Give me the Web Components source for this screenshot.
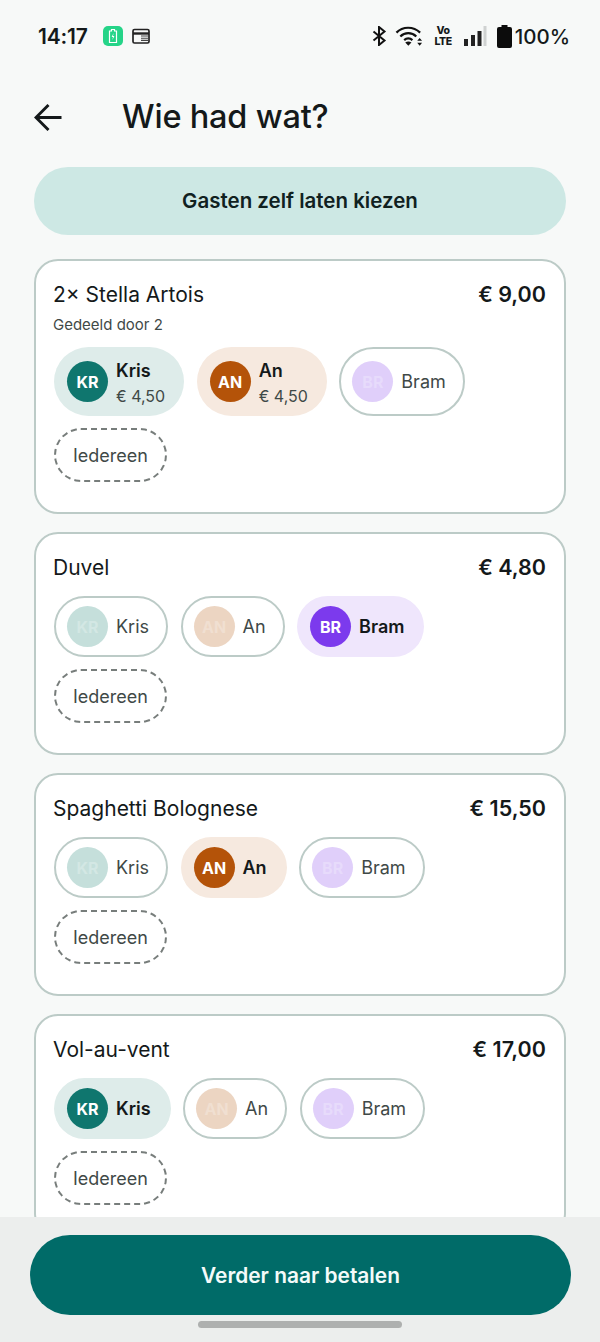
<!DOCTYPE html>
<html lang="nl"><head><meta charset="utf-8"><title>Wie had wat?</title>
<style>
html,body{margin:0;padding:0;height:1342px;overflow:hidden}
body{font-family:Inter,"Noto Sans",sans-serif;background:#f7f9f8;color:#14191a}
#app{height:1342px;display:flex;flex-direction:column}
#list{flex:1;min-height:0;overflow:hidden;display:flex;flex-direction:column;gap:18px;padding:0 34px}
</style></head><body>
<div id="app">
<status-bar></status-bar>
<page-header>Wie had wat?</page-header>
<pill-button>Gasten zelf laten kiezen</pill-button>
<div id="list">
<item-card name="2× Stella Artois" price="€ 9,00" note="Gedeeld door 2">
<person-chip code="KR" name="Kris" color="kr" selected amount="€ 4,50"></person-chip>
<person-chip code="AN" name="An" color="an" selected amount="€ 4,50"></person-chip>
<person-chip code="BR" name="Bram" color="br"></person-chip>
<all-chip>Iedereen</all-chip>
</item-card>
<item-card name="Duvel" price="€ 4,80">
<person-chip code="KR" name="Kris" color="kr"></person-chip>
<person-chip code="AN" name="An" color="an"></person-chip>
<person-chip code="BR" name="Bram" color="br" selected></person-chip>
<all-chip>Iedereen</all-chip>
</item-card>
<item-card name="Spaghetti Bolognese" price="€ 15,50">
<person-chip code="KR" name="Kris" color="kr"></person-chip>
<person-chip code="AN" name="An" color="an" selected></person-chip>
<person-chip code="BR" name="Bram" color="br"></person-chip>
<all-chip>Iedereen</all-chip>
</item-card>
<item-card name="Vol-au-vent" price="€ 17,00">
<person-chip code="KR" name="Kris" color="kr" selected></person-chip>
<person-chip code="AN" name="An" color="an"></person-chip>
<person-chip code="BR" name="Bram" color="br"></person-chip>
<all-chip>Iedereen</all-chip>
</item-card>
</div>
<bottom-bar>Verder naar betalen</bottom-bar>
</div>
<script>
function def(tag, html, init){
  customElements.define(tag, class extends HTMLElement{
    constructor(){super();this.attachShadow({mode:'open'}).innerHTML=html;}
    connectedCallback(){ if(init) init(this, this.shadowRoot); }
  });
}
def('status-bar',`<style>
:host{display:flex;align-items:center;height:72px;padding:0 30px 0 38px;box-sizing:border-box;font-family:Inter,sans-serif;color:#14191a}
.t{font-size:21px;font-weight:600;letter-spacing:-.2px;width:51px;white-space:nowrap}
.app{width:20px;height:20px;border-radius:5px;background:#25d488;margin-left:14px;display:flex;align-items:center;justify-content:center}
.cal{margin-left:9px;display:block}
.sp{flex:1}
.r{display:flex;align-items:center}
.vo{font-size:10.500px;font-weight:800;line-height:11px;text-align:center;margin:0 11px 0 10px;letter-spacing:-.4px;width:19px}
.pc{font-size:20.500px;font-weight:500;margin-left:3px;white-space:nowrap}
svg{display:block}
</style>
<span class="t">14:17</span>
<span class="app"><svg width="10" height="14" viewBox="0 0 10 14"><path d="M3.500 .5h3v1.500h2v11.500h-7V2h2z" fill="none" stroke="#fff" stroke-width="1.200"/><path d="M5.600 4L3.600 8h1.400l-.6 3 2-4H5z" fill="#fff"/></svg></span>
<svg class="cal" width="18" height="16" viewBox="0 0 18 16"><rect x="1" y="1.500" width="16" height="13.500" rx="1.500" fill="none" stroke="#222" stroke-width="1.700"/><path d="M1 5.500h16" stroke="#222" stroke-width="2.400"/><path d="M9 8h7M9 10.200h7M9 12.400h7" stroke="#444" stroke-width="1.100"/></svg>
<span class="sp"></span>
<span class="r">
<svg width="15" height="20" viewBox="0 0 15 20"><path d="M1.500 5.500l11 9L7 19V1l5.500 4.500-11 9" fill="none" stroke="#111" stroke-width="2"/></svg>
<svg style="margin-left:8px" width="29" height="22" viewBox="0 0 30 22"><path d="M1.500 7.500C8 .8 19 .8 26 7.500M5.500 11.500C10 7 17.500 7 22 11.500M9.500 15.200C12 13 15.500 13 18 15.200" fill="none" stroke="#111" stroke-width="2.300"/><path d="M13.800 21l-3.200-3.300c2-1.500 4.300-1.500 6.400 0z" fill="#111"/><path d="M25.500 13l-2.500 3h5zM25.500 21l-2.500-3h5z" fill="#111"/></svg>
<span class="vo">Vo<br>LTE</span>
<svg width="23" height="22" viewBox="0 0 23 22"><rect x="0" y="14" width="4" height="7" fill="#222"/><rect x="7" y="10" width="4" height="11" fill="#222"/><rect x="13.500" y="6" width="4" height="15" fill="#222"/><rect x="19.500" y="1" width="3" height="20" fill="#cfd2d1"/></svg>
<svg style="margin-left:10px" width="15" height="23" viewBox="0 0 15 23"><path d="M4.500 0h6v2H13a2 2 0 0 1 2 2v17a2 2 0 0 1-2 2H2a2 2 0 0 1-2-2V4a2 2 0 0 1 2-2h2.500z" fill="#0c0c0c"/></svg>
<span class="pc">100%</span>
</span>`);
def('page-header',`<style>
:host{display:flex;align-items:center;height:95px;padding:0 0 0 34px;box-sizing:border-box}
svg{display:block;flex:none;margin-top:-5px}
h1{margin:-6px 0 0 60px;font:500 32.500px/40px Inter,sans-serif;color:#14191a;letter-spacing:-.2px}
</style>
<svg width="28" height="27" viewBox="0 0 28 27"><path d="M27.500 13.500H2M14.500 1L2 13.500 14.500 26" fill="none" stroke="#14191a" stroke-width="2.900"/></svg>
<h1><slot></slot></h1>`);
def('pill-button',`<style>
:host{display:flex;align-items:center;justify-content:center;height:68px;margin:0 34px 24px;border-radius:34px;background:#cde8e4;color:#10211f;font:600 20.500px/24px Inter,sans-serif}
</style><slot></slot>`);
def('item-card',`<style>
:host{display:block;flex:none;background:#fff;border:2px solid #bccbc7;border-radius:24px;padding:20px 18px 30px;font-family:Inter,sans-serif}
.h{display:flex;justify-content:space-between;align-items:center;height:26px;padding-bottom:4px}
.n{font-size:21px;font-weight:400;color:#14191a;margin-left:-1px}
.p{font-size:21.500px;font-weight:600;color:#14191a}
.s{font-size:15px;line-height:20px;color:#3f4947;margin:4px 0 0 -1px}
.s:empty{display:none}
.c{display:flex;flex-wrap:wrap;gap:12px 12.500px;margin-top:12px}
</style>
<div class="h"><span class="n"></span><span class="p"></span></div>
<div class="s"></div>
<div class="c"><slot></slot></div>`,(h,r)=>{
  r.querySelector('.n').textContent=h.getAttribute('name');
  r.querySelector('.p').textContent=h.getAttribute('price');
  r.querySelector('.s').textContent=h.getAttribute('note')||'';
});
const pal={kr:['#0f766e','#deecea','#c5dfdb'],an:['#b45309','#f6e9df','#ecd5c2'],br:['#7c3aed','#efe6fc','#e0cffa']};
def('person-chip',`<style>
:host{display:inline-flex;align-items:center;box-sizing:border-box;min-height:61px;padding:0 17px 0 11px;border:2px solid #bccbc7;border-radius:35px;background:#fff;font-family:Inter,sans-serif;color:#3f4947}
:host([selected]){border-color:transparent;background:var(--soft);color:#14191a;padding-right:18px}
:host([amount]){min-height:69px;padding-right:17px}
.a{width:41px;height:41px;border-radius:50%;flex:none;display:flex;align-items:center;justify-content:center;font-size:16px;font-weight:700;background:var(--pale);color:rgba(255,255,255,.25);margin-right:8px}
.n{font-size:18px;line-height:22px;font-weight:400;white-space:nowrap}
:host([selected]) .a{background:var(--main);color:#fff}
:host([selected]) .n{font-weight:600}
.m{font-size:16px;line-height:22px;color:#3f4947;white-space:nowrap;margin-top:3px}
.m:empty{display:none}
.t{display:block}
:host([amount]) .t{padding-top:3px}
</style><span class="a"></span><span class="t"><div class="n"></div><div class="m"></div></span>`,(h,r)=>{
  const p=pal[h.getAttribute('color')];
  h.style.setProperty('--main',p[0]);h.style.setProperty('--soft',p[1]);h.style.setProperty('--pale',p[2]);
  r.querySelector('.a').textContent=h.getAttribute('code');
  r.querySelector('.n').textContent=h.getAttribute('name');
  r.querySelector('.m').textContent=h.getAttribute('amount')||'';
});
def('all-chip',`<style>
:host{display:inline-flex;align-items:center;box-sizing:border-box;height:54px;padding:2px 17px 0;border:2px dashed #777d7b;border-radius:27px;font:400 18px/22px Inter,sans-serif;color:#3f4947}
</style><slot></slot>`);
def('bottom-bar',`<style>
:host{display:block;flex:none;height:125px;box-sizing:border-box;background:#eceeed;padding-top:18px}
.b{height:80px;margin:0 29px 0 30px;border-radius:40px;background:#006b68;color:#f4fbfa;display:flex;align-items:center;justify-content:center;padding-top:1px;box-sizing:border-box;font:600 20.900px/24px Inter,sans-serif}
.i{width:204px;height:7px;border-radius:4px;background:#aeb0af;margin:6px auto 0}
</style><div class="b"><slot></slot></div><div class="i"></div>`);
</script>
</body></html>
